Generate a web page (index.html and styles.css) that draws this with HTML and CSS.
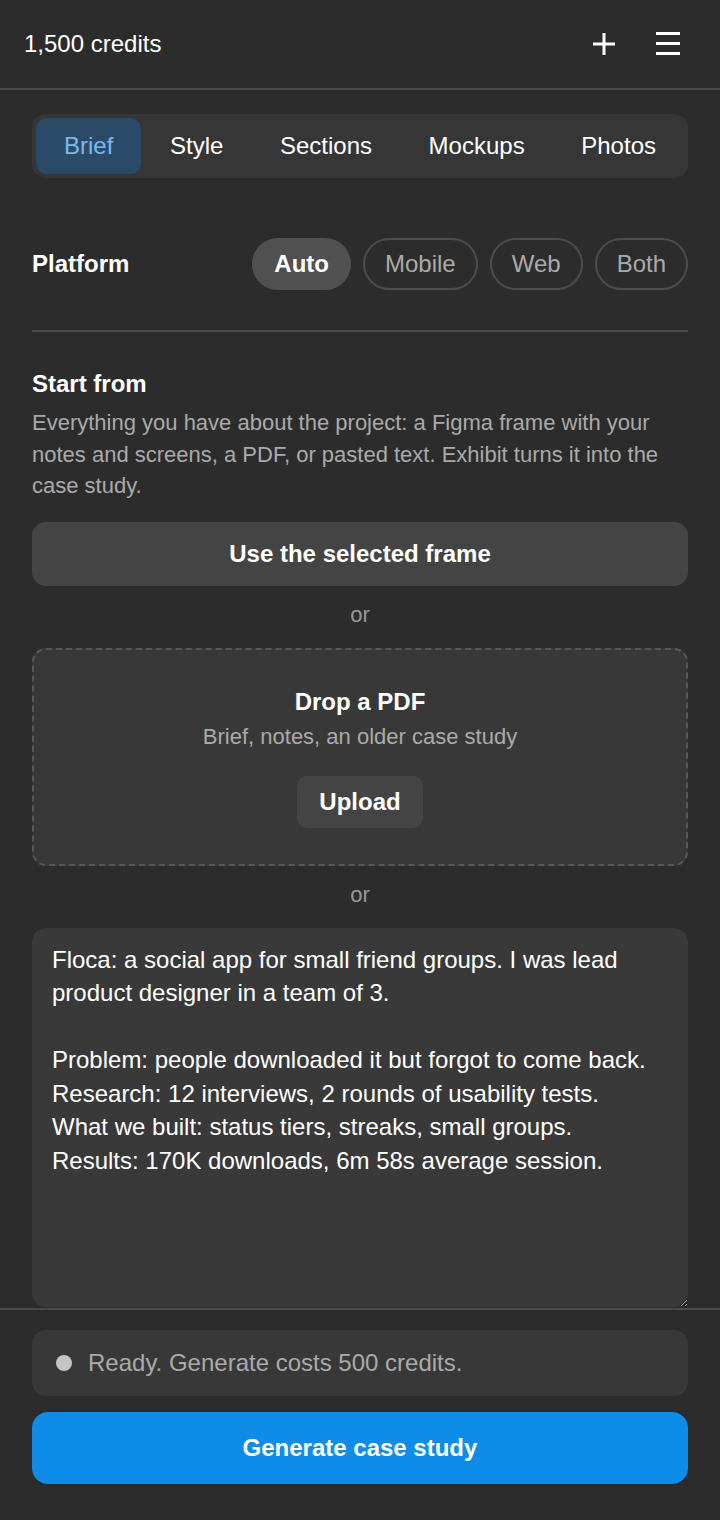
FILE: index.html
```html
<!DOCTYPE html>
<html lang="en">
<head>
    <meta charset="UTF-8">
    <meta name="viewport" content="width=device-width, initial-scale=1.0">
    <title>Exhibit</title>
    <link rel="stylesheet" href="styles.css">
</head>
<body>
    <header class="topbar">
        <span class="credits">1,500 credits</span>
        <div class="topbar-actions">
            <button class="icon-btn" aria-label="Add">
                <svg width="24" height="24" viewBox="0 0 24 24"><path d="M12 1v22M1 12h22" stroke="#fff" stroke-width="3" fill="none"/></svg>
            </button>
            <button class="icon-btn" aria-label="Menu">
                <svg width="24" height="24" viewBox="0 0 24 24"><path d="M0 1.5h24M0 11.5h24M0 21.5h24" stroke="#fff" stroke-width="3" fill="none"/></svg>
            </button>
        </div>
    </header>

    <main class="content">
        <nav class="tabs">
            <a class="tab active" href="#">Brief</a>
            <a class="tab" href="#">Style</a>
            <a class="tab" href="#">Sections</a>
            <a class="tab" href="#">Mockups</a>
            <a class="tab" href="#">Photos</a>
        </nav>

        <div class="platform">
            <span class="label">Platform</span>
            <div class="pills">
                <button class="pill selected">Auto</button>
                <button class="pill">Mobile</button>
                <button class="pill">Web</button>
                <button class="pill">Both</button>
            </div>
        </div>

        <hr class="divider">

        <section class="start">
            <h3 class="label">Start from</h3>
            <p class="hint">Everything you have about the project: a Figma frame with your notes and screens, a PDF, or pasted text. Exhibit turns it into the case study.</p>

            <button class="wide-btn">Use the selected frame</button>
            <div class="or">or</div>

            <div class="dropzone">
                <div class="drop-title">Drop a PDF</div>
                <div class="drop-sub">Brief, notes, an older case study</div>
                <button class="upload">Upload</button>
            </div>
            <div class="or">or</div>

            <textarea class="brief-text">Floca: a social app for small friend groups. I was lead product designer in a team of 3.

Problem: people downloaded it but forgot to come back.
Research: 12 interviews, 2 rounds of usability tests.
What we built: status tiers, streaks, small groups.
Results: 170K downloads, 6m 58s average session.</textarea>
        </section>
    </main>

    <footer class="bottombar">
        <div class="status">
            <span class="dot"></span>
            <span>Ready. Generate costs 500 credits.</span>
        </div>
        <button class="generate">Generate case study</button>
    </footer>
</body>
</html>
```

FILE: styles.css
```css
* {
    box-sizing: border-box;
}

body {
    font-family: 'Liberation Sans', Arial, sans-serif;
    background-color: #2c2c2c;
    color: #ffffff;
    margin: 0;
    padding: 0;
    height: 1520px;
    display: flex;
    flex-direction: column;
    overflow: hidden;
}

button {
    font-family: inherit;
    cursor: pointer;
}

/* Top bar */
.topbar {
    height: 90px;
    flex-shrink: 0;
    display: flex;
    align-items: center;
    justify-content: space-between;
    padding: 0 32px 0 24px;
    border-bottom: 2px solid #4a4a4a;
}

.credits {
    font-size: 24px;
}

.topbar-actions {
    display: flex;
    gap: 24px;
}

.icon-btn {
    width: 40px;
    height: 40px;
    display: flex;
    align-items: center;
    justify-content: center;
    background: none;
    border: none;
    padding: 0;
}

/* Scrolling content */
.content {
    flex: 1;
    overflow: hidden;
    padding: 24px 32px 0;
}

.tabs {
    display: flex;
    justify-content: space-between;
    background: #363636;
    border-radius: 14px;
    padding: 4px;
    height: 64px;
}

.tab {
    display: flex;
    align-items: center;
    padding: 0 28px;
    border-radius: 11px;
    color: #ffffff;
    text-decoration: none;
    font-size: 24px;
}

.tab.active {
    background: #2b4a68;
    color: #7ab9f0;
}

.platform {
    display: flex;
    align-items: center;
    justify-content: space-between;
    margin-top: 60px;
}

.label {
    font-size: 24px;
    font-weight: bold;
    margin: 0;
}

.pills {
    display: flex;
    gap: 12px;
}

.pill {
    height: 52px;
    padding: 0 20px;
    border-radius: 26px;
    border: 2px solid #4c4c4c;
    background: transparent;
    color: #aaaaaa;
    font-size: 24px;
}

.pill.selected {
    background: #505050;
    border-color: #505050;
    color: #ffffff;
    font-weight: bold;
}

.divider {
    border: none;
    border-top: 2px solid #4a4a4a;
    margin: 40px 0 0;
}

.start {
    padding-top: 37px;
}

.start .label {
    line-height: 30px;
}

.hint {
    font-size: 22px;
    line-height: 31.5px;
    color: #aaaaaa;
    margin: 8px 0 0;
}

.wide-btn {
    display: block;
    width: 100%;
    height: 64px;
    margin-top: 20px;
    background: #444444;
    border: none;
    border-radius: 14px;
    color: #ffffff;
    font-size: 24px;
    font-weight: bold;
}

.or {
    text-align: center;
    color: #999999;
    font-size: 22px;
    line-height: 30px;
    margin: 14px 0 18px;
}

.dropzone {
    background: #383838;
    border: 2px dashed #575757;
    border-radius: 14px;
    padding: 37px 20px 36px;
    display: flex;
    flex-direction: column;
    align-items: center;
}

.drop-title {
    font-size: 24px;
    font-weight: bold;
    line-height: 30px;
}

.drop-sub {
    font-size: 22px;
    line-height: 30px;
    color: #aaaaaa;
    margin-top: 5px;
}

.upload {
    margin-top: 24px;
    height: 52px;
    padding: 0 22px;
    background: #444444;
    border: none;
    border-radius: 10px;
    color: #ffffff;
    font-size: 24px;
    font-weight: bold;
}

.brief-text {
    display: block;
    width: 100%;
    height: 379px;
    background: #393939;
    border: none;
    border-radius: 14px;
    padding: 15px 20px;
    color: #ffffff;
    font-family: inherit;
    font-size: 24px;
    line-height: 33.6px;
    resize: vertical;
    outline: none;
}

/* Bottom bar */
.bottombar {
    flex-shrink: 0;
    border-top: 2px solid #4a4a4a;
    padding: 20px 32px 36px;
    display: flex;
    flex-direction: column;
    gap: 16px;
    background: #2c2c2c;
}

.status {
    height: 66px;
    background: #383838;
    border-radius: 14px;
    display: flex;
    align-items: center;
    gap: 16px;
    padding: 0 24px;
    color: #aaaaaa;
    font-size: 24px;
}

.dot {
    width: 16px;
    height: 16px;
    border-radius: 50%;
    background: #c4c4c4;
}

.generate {
    height: 72px;
    background: #0e8de8;
    border: none;
    border-radius: 16px;
    color: #ffffff;
    font-size: 24px;
    font-weight: bold;
}
```
